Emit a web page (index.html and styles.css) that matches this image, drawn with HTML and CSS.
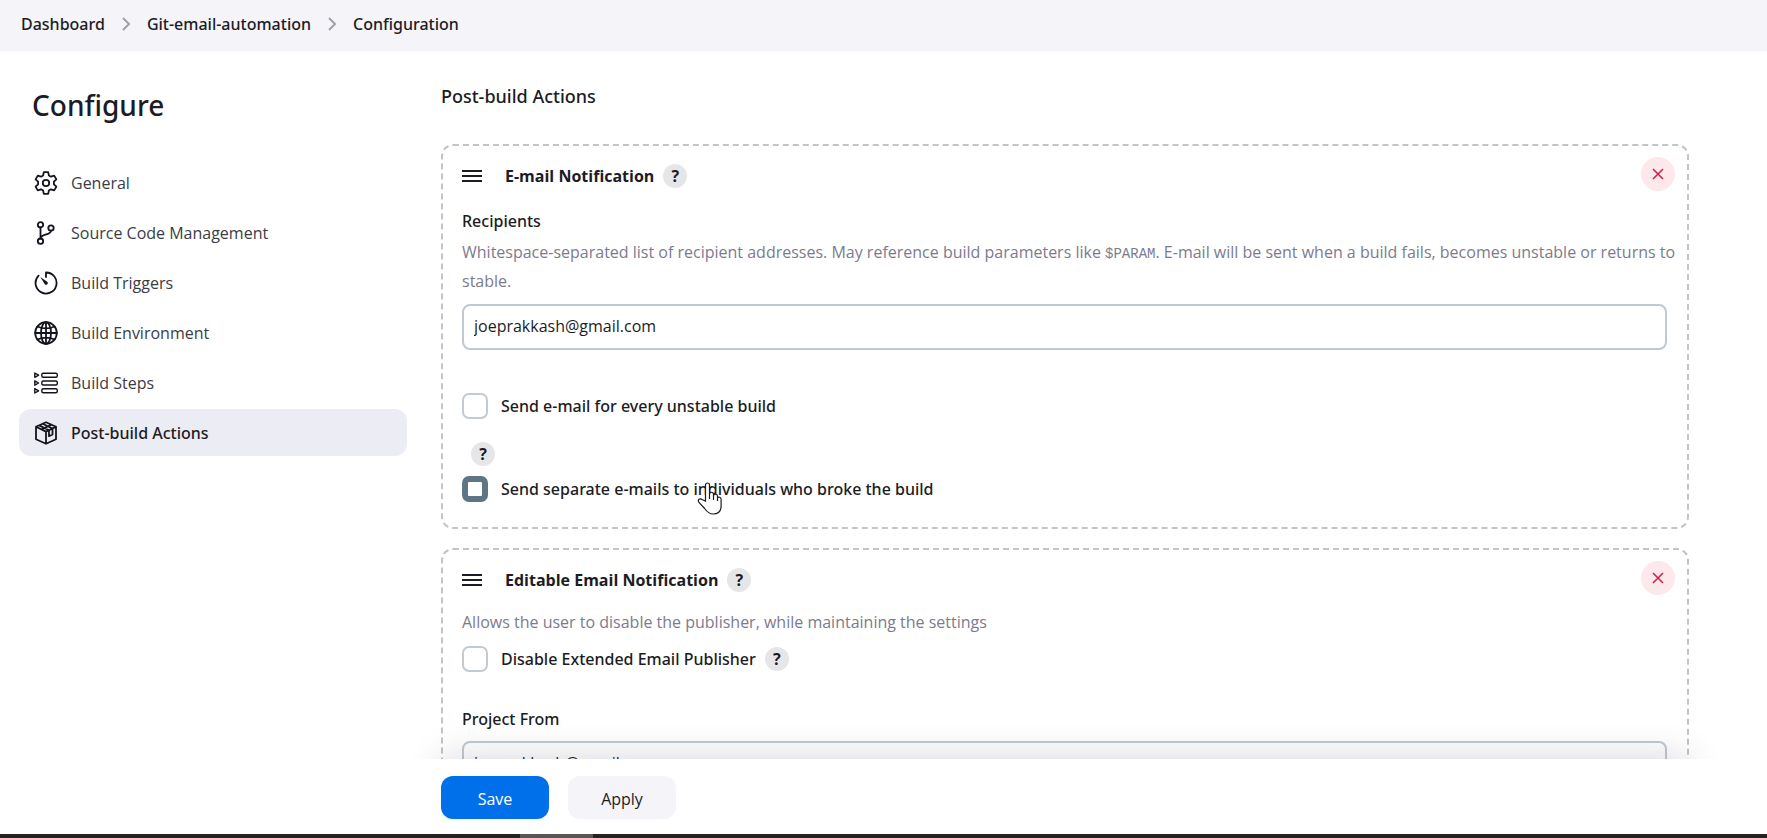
FILE: index.html
```html
<!DOCTYPE html>
<html lang="en">
<head>
<meta charset="utf-8">
<meta name="viewport" content="width=device-width, initial-scale=1">
<title>Git-email-automation Configuration</title>
<link rel="stylesheet" href="styles.css">
</head>
<body>
<nav class="breadcrumbs" aria-label="Breadcrumb">
  <a href="#">Dashboard</a>
  <svg class="chevron" viewBox="0 0 10 16"><path d="M2 2l6 6-6 6"/></svg>
  <a href="#">Git-email-automation</a>
  <svg class="chevron" viewBox="0 0 10 16"><path d="M2 2l6 6-6 6"/></svg>
  <a href="#">Configuration</a>
</nav>
<div class="page">
  <aside class="sidebar">
    <h1>Configure</h1>
    <nav class="tasks" aria-label="Sections">
      <a class="task" href="#">
        <svg class="icon" viewBox="0 0 24 24"><circle cx="12" cy="12" r="3.2"/><path d="M9.800 1.200h4.400l.7 3.300 2 1.200 3.300-1.100 2.200 3.800-2.500 2.300v2.600l2.500 2.300-2.200 3.800-3.300-1.100-2 1.200-.7 3.300H9.800l-.7-3.300-2-1.200-3.300 1.100-2.200-3.800 2.500-2.300v-2.600L1.600 8.400l2.200-3.800 3.300 1.100 2-1.200z"/></svg>
        General
      </a>
      <a class="task" href="#">
        <svg class="icon" viewBox="0 0 24 24"><circle cx="6.500" cy="3.800" r="2.700"/><circle cx="6.500" cy="20.200" r="2.700"/><circle cx="17" cy="7" r="2.700"/><path d="M6.500 6.500v11M17 9.700c0 4.500-10 2.800-10.500 7.800"/></svg>
        Source Code Management
      </a>
      <a class="task" href="#">
        <svg class="icon" viewBox="0 0 24 24"><path d="M12 6V1.500A10.500 10.500 0 1 1 4.600 4.600"/><path class="solid" d="M6.300 6l7.200 5a1.800 1.800 0 0 1-2.500 2.500z"/></svg>
        Build Triggers
      </a>
      <a class="task" href="#">
        <svg class="icon" viewBox="0 0 24 24"><circle cx="12" cy="12" r="10.800"/><ellipse cx="12" cy="12" rx="5" ry="10.800"/><path d="M12 1.200v21.600M1.200 12h21.600M3.500 5.500c5 2.600 12 2.600 17 0M3.500 18.500c5-2.600 12-2.600 17 0"/></svg>
        Build Environment
      </a>
      <a class="task" href="#">
        <svg class="icon fine" viewBox="0 0 24 24"><rect x="7.800" y="2.200" width="15.500" height="4" rx="1.500"/><rect x="7.800" y="10" width="15.500" height="4" rx="1.500"/><rect x="7.800" y="17.800" width="15.500" height="4" rx="1.500"/><path d="M.8 2v4.400l3.800-2.200zM.8 9.800v4.400L4.600 12zM.8 17.600V22l3.800-2.200z"/></svg>
        Build Steps
      </a>
      <a class="task current" href="#" aria-current="page">
        <svg class="icon" viewBox="0 0 24 24"><path d="M12 1.200l10 4.600v12.400l-10 4.600-10-4.600V5.800zM2 5.800l10 4.800 10-4.800M12 10.600v12.200M5.200 4.400l9.800 4.800v6l3.500-1.700V7.500L8.700 2.700M7.500 8.400l9.800-4.700"/></svg>
        Post-build Actions
      </a>
    </nav>
  </aside>
  <main class="content">
    <h2>Post-build Actions</h2>

    <section class="card">
      <header class="card-head">
        <svg class="grip" viewBox="0 0 20 12"><path d="M0 1h20M0 6h20M0 11h20"/></svg>
        <h3>E-mail Notification</h3>
        <button class="help" type="button" aria-label="Help for E-mail Notification">?</button>
        <button class="remove" type="button" aria-label="Remove E-mail Notification"><svg viewBox="0 0 10 10"><path d="M0 0l10 10M10 0L0 10"/></svg></button>
      </header>
      <label class="field-label" for="recipients">Recipients</label>
      <p class="hint">Whitespace-separated list of recipient addresses. May reference build parameters like <code>$PARAM</code>. E-mail will be sent when a build fails, becomes unstable or returns to stable.</p>
      <input class="textbox" id="recipients" type="text" value="joeprakkash@gmail.com">
      <div class="check-row unstable">
        <input type="checkbox" id="unstable"><label for="unstable">Send e-mail for every unstable build</label>
      </div>
      <div class="help-row"><button class="help" type="button" aria-label="Help for unstable builds">?</button></div>
      <div class="check-row">
        <input class="pressed" type="checkbox" id="separate"><label for="separate">Send separate e-mails to individuals who broke the build</label>
      </div>
    </section>

    <section class="card">
      <header class="card-head">
        <svg class="grip" viewBox="0 0 20 12"><path d="M0 1h20M0 6h20M0 11h20"/></svg>
        <h3>Editable Email Notification</h3>
        <button class="help" type="button" aria-label="Help for Editable Email Notification">?</button>
        <button class="remove" type="button" aria-label="Remove Editable Email Notification"><svg viewBox="0 0 10 10"><path d="M0 0l10 10M10 0L0 10"/></svg></button>
      </header>
      <p class="hint">Allows the user to disable the publisher, while maintaining the settings</p>
      <div class="check-row disable">
        <input type="checkbox" id="disable"><label for="disable">Disable Extended Email Publisher</label>
        <button class="help" type="button" aria-label="Help for Disable Extended Email Publisher">?</button>
      </div>
      <label class="field-label" for="from">Project From</label>
      <input class="textbox" id="from" type="text" value="joeprakkash@gmail.com">
    </section>
  </main>
</div>
<div class="dock">
  <div class="actions">
    <button class="btn primary" type="button">Save</button>
    <button class="btn" type="button">Apply</button>
  </div>
  <div class="taskbar"><span></span></div>
</div>
<svg class="pointer" viewBox="0 0 26 34"><path d="M8.500 19V3a2 2 0 0 1 4 0V12a2 2 0 0 1 4 .5V14a2 2 0 0 1 4 .5V16a2 2 0 0 1 3.600 1v7c0 5-3 8-8 8-4 0-6-2-8.500-5.500L2 20.500c-2-3 1-4.500 3-3zM12.500 12v5M16.500 14v4M20.500 16v3"/></svg>
</body>
</html>
```
FILE: styles.css
```css
* { box-sizing: border-box; }

body {
  margin: 0;
  height: 100vh;
  overflow: hidden;
  display: flex;
  flex-direction: column;
  background: #fff;
  color: #1c1c24;
  font-family: "Open Sans", "Noto Sans", sans-serif;
  font-size: 16px;
  line-height: 24px;
}

a { color: inherit; text-decoration: none; }
h1, h2, h3, p { margin: 0; }
button, input { font: inherit; color: inherit; }
svg { fill: none; stroke: currentColor; }

.breadcrumbs {
  flex: none;
  display: flex;
  align-items: center;
  gap: 16px;
  height: 51px;
  padding: 0 21px 4px;
  background: #f4f4f9;
  font-family: "Noto Sans", "Open Sans", sans-serif;
  font-weight: 500;
}
.chevron { width: 10px; height: 16px; color: #a0a0a8; stroke-width: 2; }

.page {
  flex: 1;
  min-height: 0;
  overflow: hidden;
  display: grid;
  grid-template-columns: 388px 1fr;
  gap: 34px;
  padding: 0 78px 0 19px;
}

.sidebar h1 {
  padding: 33px 13px;
  font-family: "Noto Sans", "Open Sans", sans-serif;
  font-size: 28px;
  line-height: 42px;
  font-weight: 500;
}
.tasks { display: flex; flex-direction: column; gap: 3px; }
.task {
  display: flex;
  align-items: center;
  gap: 13px;
  height: 47px;
  padding: 0 15px;
  border-radius: 12px;
  color: #3c3c46;
}
.task.current {
  background: #ececf5;
  color: #1c1c24;
  font-family: "Noto Sans", "Open Sans", sans-serif;
  font-weight: 500;
}
.icon { width: 24px; height: 24px; color: #14141f; stroke-width: 1.800; stroke-linejoin: round; stroke-linecap: round; }
.icon .solid { fill: currentColor; stroke: none; }
.icon.fine { stroke-width: 1.400; }

.content { min-width: 0; padding-top: 33px; }
.content h2 {
  margin-bottom: 36px;
  font-family: "Noto Sans", "Open Sans", sans-serif;
  font-size: 18px;
  line-height: 24px;
  font-weight: 500;
}

.card {
  display: flex;
  flex-direction: column;
  margin-bottom: 19px;
  padding: 11px 20px 25px 19px;
  border: 2px dashed #c0c5c9;
  border-radius: 12px;
}
.card-head { display: flex; align-items: center; height: 37px; margin-right: -8px; }
.grip { width: 20px; height: 12px; stroke-width: 2; margin-right: 23px; }
.card-head h3 { font-size: 16px; font-weight: 700; }
.help {
  width: 24px;
  height: 24px;
  margin-left: 9px;
  padding: 0;
  border: 0;
  border-radius: 50%;
  background: #e6e6e9;
  font-size: 16px;
  line-height: 24px;
  font-weight: 700;
}
.remove {
  display: grid;
  place-items: center;
  align-self: flex-start;
  width: 34px;
  height: 34px;
  margin-left: auto;
  padding: 0;
  border: 0;
  border-radius: 50%;
  background: #fde8ec;
  color: #cc1f41;
}
.remove svg { width: 10px; height: 10px; stroke-width: 1.500; overflow: visible; }

.field-label {
  margin-top: 15px;
  font-family: "Noto Sans", "Open Sans", sans-serif;
  font-weight: 500;
}
.hint { margin: 5px -12px 0 0; color: #7c7b8e; line-height: 29px; }
.hint code { font: 14px "Liberation Mono", monospace; }
.card-head + .hint { margin-top: 10px; }
.textbox {
  width: 100%;
  height: 46px;
  margin-top: 8px;
  padding: 0 10px 2px;
  border: 2px solid #c0c9d0;
  border-radius: 8px;
  background: #fff;
}
.field-label + .textbox { margin-top: 10px; }

.check-row {
  display: flex;
  align-items: center;
  height: 27px;
  font-family: "Noto Sans", "Open Sans", sans-serif;
  font-weight: 500;
}
.check-row input {
  appearance: none;
  flex: none;
  width: 26px;
  height: 26px;
  margin: 0 13px 0 0;
  border: 2px solid #c3cad1;
  border-radius: 7px;
  background: #fff;
}
.check-row input.pressed { border: 6px solid #5d7585; }
.unstable { margin-top: 42px; }
.help-row { display: flex; height: 56px; padding-top: 23px; }
.disable { margin: 8px 0 20px; }

.dock { flex: none; position: relative; }
.actions {
  display: flex;
  gap: 19px;
  margin: 0 78px 0 441px;
  padding: 17px 0 15px;
  box-shadow: 0 -2px 36px rgba(20, 20, 50, .160);
  background: #fff;
  clip-path: polygon(-30px -50px, calc(100% + 30px) -50px, calc(100% + 30px) 0, 100% 0, 100% 100%, 0 100%, 0 0, -30px 0);
}
.btn {
  width: 108px;
  height: 43px;
  padding: 2px 0 0;
  border: 0;
  border-radius: 12px;
  background: #f4f4f9;
}
.btn.primary { background: #0070ea; color: #fff; }
.taskbar { height: 4px; padding-left: 520px; background: #262222; }
.taskbar span { display: block; width: 73px; height: 4px; background: #5c5454; }

.pointer { position: absolute; left: 697px; top: 482px; width: 26px; height: 34px; stroke-width: 1.200; }
.pointer path { fill: #fff; }
```
